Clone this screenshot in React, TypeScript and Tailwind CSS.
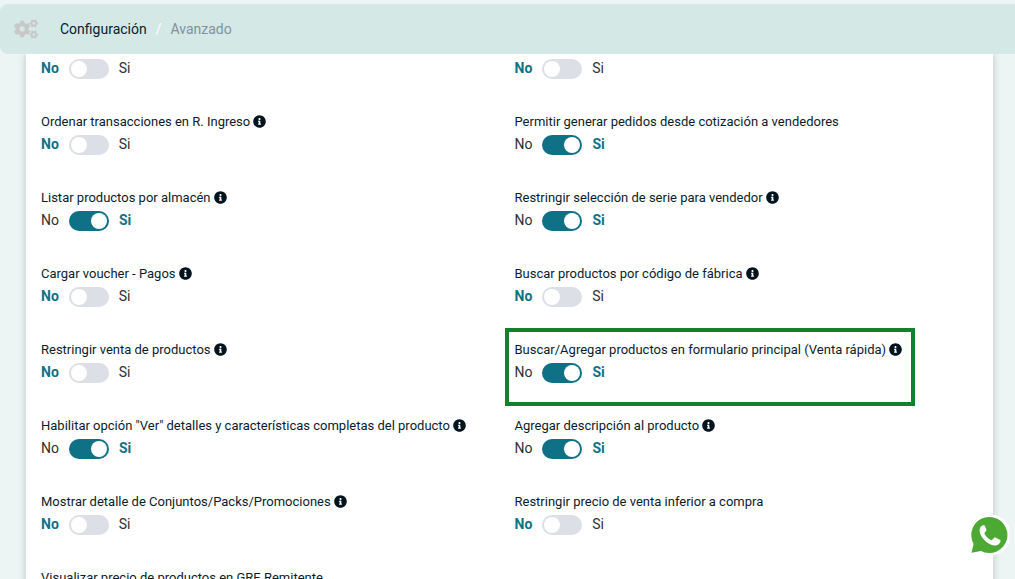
import React, { useId, useState } from "react";
import { FaCogs, FaInfoCircle } from "react-icons/fa";

type Option = {
  label?: string;
  on?: boolean;
  info?: boolean;
  highlighted?: boolean;
};

const options: Option[] = [
  {},
  {},
  { label: "Ordenar transacciones en R. Ingreso", info: true },
  { label: "Permitir generar pedidos desde cotización a vendedores", on: true },
  { label: "Listar productos por almacén", on: true, info: true },
  { label: "Restringir selección de serie para vendedor", on: true, info: true },
  { label: "Cargar voucher - Pagos", info: true },
  { label: "Buscar productos por código de fábrica", info: true },
  { label: "Restringir venta de productos", info: true },
  {
    label: "Buscar/Agregar productos en formulario principal (Venta rápida)",
    on: true,
    info: true,
    highlighted: true,
  },
  {
    label: 'Habilitar opción "Ver" detalles y características completas del producto',
    on: true,
    info: true,
  },
  { label: "Agregar descripción al producto", on: true, info: true },
  { label: "Mostrar detalle de Conjuntos/Packs/Promociones", info: true },
  { label: "Restringir precio de venta inferior a compra" },
  { label: "Visualizar precio de productos en GRE Remitente" },
];

const active = "font-bold text-[#0f7186]";
const inactive = "text-[#303133]";

function Setting({ label, on = false, info, highlighted }: Option) {
  const id = useId();
  const [checked, setChecked] = useState(on);
  return (
    <div className="px-[5px] pb-[30px]">
      <div className="relative w-fit">
        {highlighted && (
          <div className="pointer-events-none absolute -top-[11px] -right-[13px] -left-[10px] h-[78px] border-4 border-[#15802b]" />
        )}
        {label && (
          <div className="flex h-[22px] items-start gap-[3px] text-[13px] leading-[22px] whitespace-nowrap text-[#0b1c2c]">
            <label htmlFor={id}>{label}</label>
            {info && <FaInfoCircle className="mt-1 size-[13px] text-[#04141f]" aria-hidden="true" />}
          </div>
        )}
        <div className="flex h-6 items-start gap-[10px] text-sm leading-[22px]">
          <span id={`${id}-no`} className={checked ? inactive : active}>
            No
          </span>
          <span className="relative mt-[2px] flex h-5 w-10">
            <input
              id={id}
              type="checkbox"
              role="switch"
              checked={checked}
              aria-labelledby={label ? undefined : `${id}-no ${id}-si`}
              onChange={(e) => setChecked(e.target.checked)}
              className="peer h-5 w-10 cursor-pointer appearance-none rounded-full bg-[#dcdfe6] checked:bg-[#0f7186]"
            />
            <span className="pointer-events-none absolute top-[2px] left-[2px] size-4 rounded-full bg-white peer-checked:left-[22px]" />
          </span>
          <span id={`${id}-si`} className={checked ? active : inactive}>
            Si
          </span>
        </div>
      </div>
    </div>
  );
}

function WhatsAppButton() {
  return (
    <a href="#whatsapp" aria-label="WhatsApp" className="fixed right-[6px] bottom-[23px] size-[42px]">
      <svg viewBox="0 0 42 42" className="size-full" aria-hidden="true">
        <path
          d="M22.500 0.300a20.700 20.700 0 1 1-9.200 39L0.500 41.700l3.200-11.700A20.700 20.700 0 0 1 22.500 0.300z"
          fill="#fff"
        />
        <path
          d="M22.500 3a18 18 0 1 1-8.500 33.900L4.500 38.700l2.100-8.900A18 18 0 0 1 22.500 3z"
          fill="#4caa34"
        />
        <path
          d="M15.500 11.500c-1.700.9-3.200 2.900-2.900 5.500.8 7.100 8.400 13.700 14.900 14.500 2.800.3 5.500-1.700 6-4.200.1-.7-.1-1.200-.7-1.500l-4.300-2.200c-.6-.3-1.200-.2-1.600.3l-1.600 1.900c-.4.500-.9.500-1.500.2-2.700-1.300-4.900-3.500-6.200-6-.3-.6-.2-1 .2-1.500l1.300-1.400c.4-.5.5-.9.300-1.500l-1.800-4c-.4-.7-1.200-.5-2.100-.1z"
          fill="#fff"
        />
      </svg>
    </a>
  );
}

export default function App() {
  return (
    <div className="flex h-screen flex-col overflow-hidden bg-[#ecf5f4] pt-1 font-[Roboto,sans-serif]">
      <header className="z-10 flex h-[50px] shrink-0 items-center rounded-l-lg bg-[#d4e8e6] pl-[14px] text-sm">
        <FaCogs className="mr-[22px] size-6 text-[#c8c8c8]" aria-hidden="true" />
        <nav aria-label="Ruta" className="flex items-center">
          <a href="#configuracion" className="text-[#0b1c2c]">
            Configuración
          </a>
          <span className="mx-[9px] text-white">/</span>
          <span className="text-[#8290a3]">Avanzado</span>
        </nav>
      </header>
      <main className="mr-[22px] ml-[26px] grow bg-white px-[10px] pt-[3px] shadow-[0_0_8px_rgba(0,0,0,0.2)]">
        <div className="grid grid-cols-2">
          {options.map((option, i) => (
            <Setting key={i} {...option} />
          ))}
        </div>
      </main>
      <WhatsAppButton />
    </div>
  );
}
